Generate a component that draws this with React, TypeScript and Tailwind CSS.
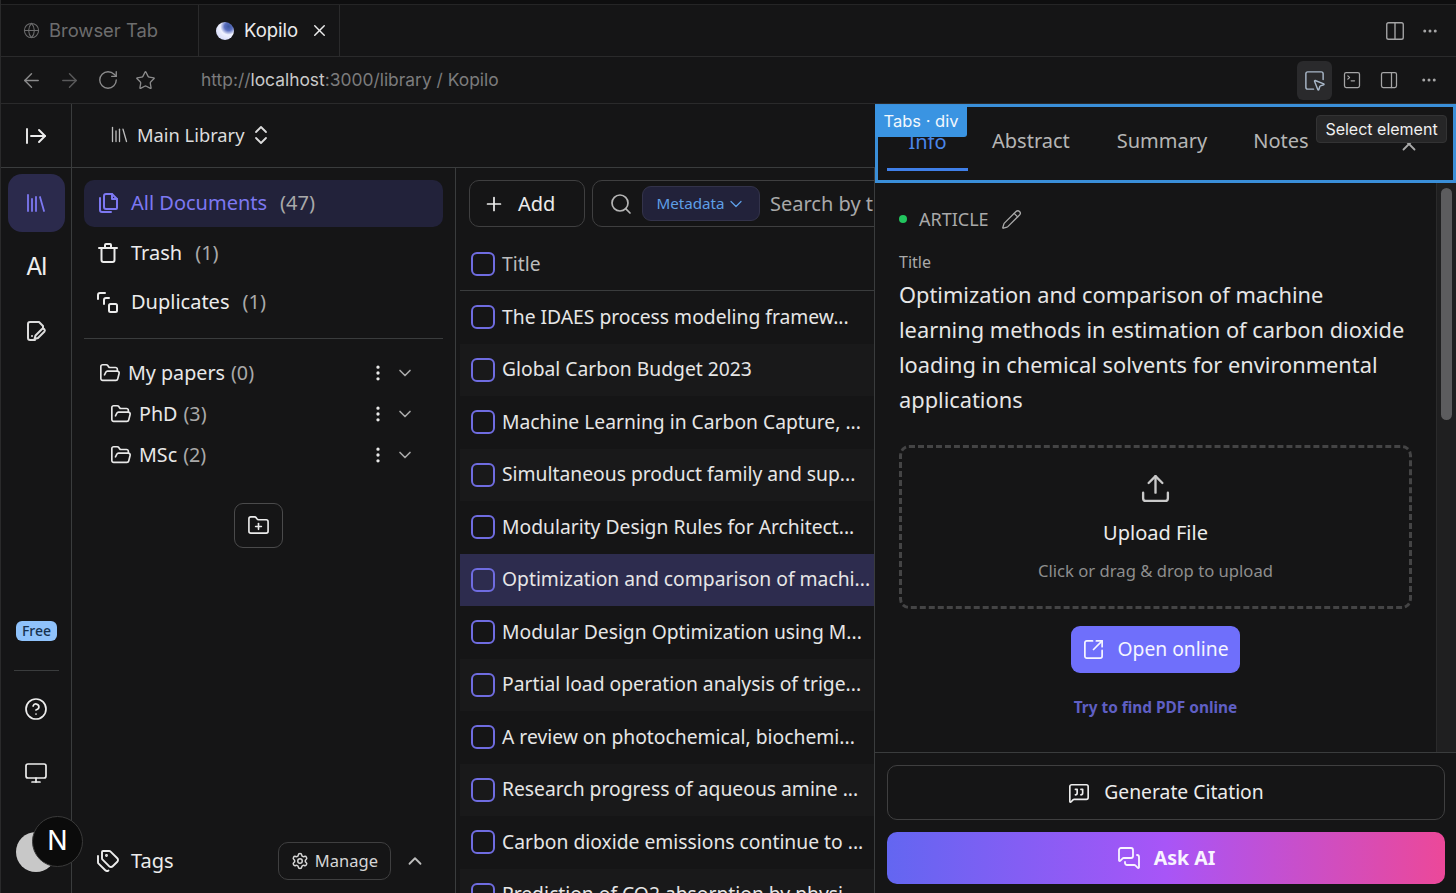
import {
  ArrowLeft,
  ArrowRight,
  ArrowRightFromLine,
  ChevronDown,
  ChevronUp,
  CircleHelp,
  Columns2,
  Ellipsis,
  EllipsisVertical,
  FolderOpen,
  FolderPlus,
  Globe,
  Library,
  MessageSquareQuote,
  MessagesSquare,
  Monitor,
  PanelRight,
  Pencil,
  Plus,
  RotateCw,
  Search,
  Settings,
  SquareArrowOutUpRight,
  SquareMousePointer,
  SquareTerminal,
  Star,
  Tags,
  Upload,
  X,
} from "lucide-react";

const documents = [
  "The IDAES process modeling framew...",
  "Global Carbon Budget 2023",
  "Machine Learning in Carbon Capture, ...",
  "Simultaneous product family and sup...",
  "Modularity Design Rules for Architect...",
  "Optimization and comparison of machi...",
  "Modular Design Optimization using M...",
  "Partial load operation analysis of trige...",
  "A review on photochemical, biochemi...",
  "Research progress of aqueous amine ...",
  "Carbon dioxide emissions continue to ...",
  "Prediction of CO2 absorption by physi...",
];

const FilesIcon = () => (
  <svg width="24" height="24" viewBox="0 0 24 24" fill="none" stroke="currentColor" strokeWidth="2" strokeLinecap="round" strokeLinejoin="round">
    <path d="M4 7v12a2 2 0 0 0 2 2h9" />
    <path d="M8 5a2 2 0 0 1 2-2h6l5 5v9a1 1 0 0 1-1 1H10a2 2 0 0 1-2-2z" />
    <path d="M16 3v5h5" />
  </svg>
);

const TrashIcon = () => (
  <svg width="24" height="24" viewBox="0 0 24 24" fill="none" stroke="currentColor" strokeWidth="2" strokeLinecap="round" strokeLinejoin="round">
    <path d="M3 7h18" />
    <path d="M5.5 7v12a2 2 0 0 0 2 2h9a2 2 0 0 0 2-2V7" />
    <path d="M9 7V4a1 1 0 0 1 1-1h4a1 1 0 0 1 1 1v3" />
  </svg>
);

const DuplicatesIcon = () => (
  <svg width="24" height="24" viewBox="0 0 24 24" fill="none" stroke="currentColor" strokeWidth="2" strokeLinecap="round" strokeLinejoin="round">
    <path d="M2 9V5a2 2 0 0 1 2-2h5" />
    <path d="M13 8h-3a2 2 0 0 0-2 2v4" />
    <rect x="13" y="14" width="8" height="8" rx="1.500" />
  </svg>
);

const UpDownIcon = () => (
  <svg width="18" height="24" viewBox="0 0 18 24" fill="none" stroke="currentColor" strokeWidth="1.800" strokeLinecap="round" strokeLinejoin="round">
    <path d="m4 9 5-5 5 5" />
    <path d="m4 15 5 5 5-5" />
  </svg>
);

const AiEditIcon = () => (
  <svg width="24" height="24" viewBox="0 0 24 24" fill="none" stroke="currentColor" strokeWidth="2" strokeLinecap="round" strokeLinejoin="round">
    <path d="M11 21H6a2 2 0 0 1-2-2V5a2 2 0 0 1 2-2h9l4 4v2" />
    <path d="m20.500 12.500-6.500 6.500-3.500 1 1-3.500 6.500-6.500a1.800 1.800 0 0 1 2.500 2.500z" />
    <path d="M8 17h.01" />
  </svg>
);

const Checkbox = () => (
  <span className="w-6 h-6 shrink-0 rounded-md border-2 border-[#6f6ce0]" />
);

function FolderRow({ name, count, indent }: { name: string; count: number; indent: boolean }) {
  return (
    <div className={`flex items-center h-[41px] ${indent ? "pl-[26px]" : "pl-[15px]"} pr-[28px] text-[#e8e8e8]`}>
      <FolderOpen size={22} strokeWidth={1.800} />
      <span className="ml-[7px] text-[19.700px]">{name}</span>
      <span className="ml-[6px] text-[19.700px] text-[#a9a9a9]">({count})</span>
      <EllipsisVertical size={20} className="ml-auto" />
      <ChevronDown size={20} className="ml-[7px] text-[#a9a9a9]" />
    </div>
  );
}

function TopBars() {
  return (
    <>
      <div className="h-[5px] bg-[#0e0e0f] border-b border-[#252526] shrink-0" />
      <div className="h-[52px] flex shrink-0 border-b border-[#2a2a2b] font-['Inter',sans-serif]">
        <div className="w-[198px] flex items-center pl-[22px] border-r border-[#2a2a2b] text-[#6d6d6e] bg-[#131314]">
          <Globe size={17} strokeWidth={1.500} />
          <span className="ml-[9px] text-[18.400px]">Browser Tab</span>
        </div>
        <div className="w-[141px] flex items-center pl-[17px] border-r border-[#2a2a2b] text-[#ececec]">
          <span className="w-[18px] h-[18px] rounded-full blur-[0.5px] bg-[radial-gradient(circle_at_70%_25%,#3f5a9f_0%,#5b6fc0_22%,#f0f2ff_45%,#c9cff5_100%)]" />
          <span className="ml-[10px] text-[18.500px]">Kopilo</span>
          <X size={19} strokeWidth={1.800} className="ml-[12px]" />
        </div>
        <div className="ml-auto flex items-center pr-[17px] text-[#a5a5a6]">
          <Columns2 size={22} strokeWidth={1.500} />
          <Ellipsis size={18} className="ml-[15px]" />
        </div>
      </div>
      <div className="h-[47px] flex items-center shrink-0 border-b border-[#2a2a2b] pl-[19px] pr-[18px] font-['Inter',sans-serif]">
        <ArrowLeft size={23} strokeWidth={1.500} className="text-[#8b8b8c]" />
        <ArrowRight size={23} strokeWidth={1.500} className="ml-[15px] text-[#5a5a5b]" />
        <RotateCw size={22} strokeWidth={1.500} className="ml-[16px] text-[#8b8b8c]" />
        <Star size={21} strokeWidth={1.500} className="ml-[16px] text-[#8b8b8c]" />
        <span className="ml-[45px] text-[17.400px] text-[#7c7c7d]">
          http://<span className="text-[#c9c9c9]">localhost</span>:3000/library / Kopilo
        </span>
        <span className="ml-auto w-[35px] h-[39px] rounded-md bg-[#2a2a2c] flex items-center justify-center text-[#a9b8c9]">
          <SquareMousePointer size={23} strokeWidth={1.500} />
        </span>
        <SquareTerminal size={20} strokeWidth={1.500} className="ml-[10px] text-[#a5a5a6]" />
        <PanelRight size={20} strokeWidth={1.500} className="ml-[17px] text-[#a5a5a6]" />
        <Ellipsis size={18} className="ml-[21px] text-[#a5a5a6]" />
      </div>
    </>
  );
}

function Rail() {
  return (
    <aside className="relative w-[71px] shrink-0 border-r border-[#3a3c3d] flex flex-col items-center">
      <div className="h-[64px] w-full border-b border-[#3a3c3d] flex items-center justify-center text-[#ededed] shrink-0">
        <ArrowRightFromLine size={24} strokeWidth={1.900} />
      </div>
      <div className="mt-[6px] w-[57px] h-[58px] rounded-[14px] bg-[#2b2a4c] flex items-center justify-center text-[#7d78f2]">
        <Library size={24} strokeWidth={1.800} />
      </div>
      <div className="mt-[20px] text-[#ededed] text-[24px] leading-[30px] tracking-[-1.500px] font-['Inter',sans-serif]">AI</div>
      <div className="mt-[37px] text-[#dcdcdc] h-[24px]">
        <AiEditIcon />
      </div>
      <div className="mt-[278px] ml-px rounded-md bg-[#8fc2fb] px-[6px] text-[14px] leading-[20px] font-medium text-[#17324f]">Free</div>
      <div className="mt-[29px] w-[45px] h-px bg-[#3a3c3d]" />
      <CircleHelp size={24} strokeWidth={1.700} className="mt-[26px] text-[#ededed]" />
      <Monitor size={24} strokeWidth={1.700} className="mt-[40px] text-[#ededed]" />
      <span className="mt-[47px] w-[40px] h-[40px] rounded-full bg-[#c8c8c8]" />
      <span className="absolute left-[31px] bottom-[26px] w-[51px] h-[51px] rounded-full bg-[#0b0b0b] border border-[#3a3a3a] flex items-center justify-center text-[27px] text-white font-['Inter',sans-serif]">
        N
      </span>
    </aside>
  );
}

function Sidebar() {
  return (
    <section className="w-[384px] shrink-0 border-r border-[#3a3c3d] flex flex-col px-[12px] pt-[12px] pb-[13px]">
      <div className="h-[47px] rounded-[10px] bg-[#22223a] flex items-center pl-[12px] pb-[2px] text-[#7d78f2]">
        <FilesIcon />
        <span className="ml-[11px] text-[20px]">All Documents</span>
        <span className="ml-[13px] text-[20px] text-[#a9a9a9]">(47)</span>
      </div>
      <div className="h-[49px] mt-px flex items-center pl-[12px] text-[#ececec]">
        <TrashIcon />
        <span className="ml-[11px] text-[20px]">Trash</span>
        <span className="ml-[13px] text-[20px] text-[#a9a9a9]">(1)</span>
      </div>
      <div className="h-[50px] flex items-center pl-[12px] text-[#ececec]">
        <DuplicatesIcon />
        <span className="ml-[11px] text-[20px]">Duplicates</span>
        <span className="ml-[13px] text-[20px] text-[#a9a9a9]">(1)</span>
      </div>
      <div className="h-px bg-[#3a3c3d] mt-[11px] mb-[13px]" />
      <FolderRow name="My papers" count={0} indent={false} />
      <FolderRow name="PhD" count={3} indent={true} />
      <FolderRow name="MSc" count={2} indent={true} />
      <div className="mt-[28px] self-start ml-[150px] w-[49px] h-[45px] rounded-[9px] border border-[#4a4a4b] flex items-center justify-center text-[#ececec]">
        <FolderPlus size={23} strokeWidth={1.700} />
      </div>
      <div className="mt-auto flex items-center pl-[12px] pr-[17px] text-[#ececec]">
        <Tags size={24} strokeWidth={1.900} />
        <span className="ml-[11px] text-[20px]">Tags</span>
        <div className="ml-auto h-[38px] px-[12px] rounded-[10px] border border-[#3f3f40] flex items-center gap-[6px] text-[16.500px] text-[#d6d6d6]">
          <Settings size={18} />
          Manage
        </div>
        <ChevronUp size={22} className="ml-[13px] text-[#bdbdbd]" />
      </div>
    </section>
  );
}

function DocumentList() {
  return (
    <section className="w-[419px] shrink-0 border-r border-[#3a3c3d] overflow-hidden flex flex-col">
      <div className="flex pt-[12px] pl-[13px] gap-[7px] shrink-0">
        <div className="w-[116px] h-[47px] rounded-[10px] border border-[#3f3f40] flex items-center pl-[13px] text-[#ececec] shrink-0">
          <Plus size={22} strokeWidth={1.900} />
          <span className="ml-[13px] text-[20px]">Add</span>
        </div>
        <div className="w-[400px] h-[47px] rounded-[10px] border border-[#3f3f40] flex items-center pl-[16px] shrink-0 whitespace-nowrap">
          <Search size={24} strokeWidth={1.700} className="text-[#b5b5b5] shrink-0" />
          <span className="ml-[9px] h-[35px] w-[118px] shrink-0 rounded-[9px] bg-[#22223a] border border-[#33334a] flex items-center justify-center gap-[1px] text-[15.200px] text-[#5e9fe6]">
            Metadata
            <ChevronDown size={20} strokeWidth={1.500} />
          </span>
          <span className="ml-[10px] text-[20px] text-[#a9a9a9]">Search by title or content</span>
        </div>
      </div>
      <div className="ml-[4px] mt-[11px] h-[53px] flex items-center pl-[11px] gap-[7px] border-b border-[#3a3c3d] shrink-0 text-[19.300px] text-[#bcbcbc]">
        <Checkbox />
        Title
      </div>
      {documents.map((title, i) => (
        <div
          key={title}
          className={`ml-[4px] h-[52.500px] flex items-center pl-[11px] gap-[7px] shrink-0 whitespace-nowrap text-[19.300px] ${
            i === 5 ? "bg-[#2d2c4e]" : i % 2 === 1 ? "bg-[#19191a]" : ""
          } text-[#e6e6e6]`}
        >
          <Checkbox />
          {title}
        </div>
      ))}
    </section>
  );
}

function DetailPanel() {
  return (
    <section className="relative flex-1 min-w-0 flex flex-col -mt-[64px] bg-[#151516]">
      <div className="h-[79px] shrink-0 flex items-end border-[3px] border-[#3a8fd9] text-[20px] text-[#b5b5b5]">
        <div className="ml-[9px] w-[81px] h-[55px] text-center text-[#4a86e8] pt-[11px] border-b-[3px] border-[#3f7fe8] mb-[9px]">Info</div>
        <div className="ml-[24px] pb-[24px]">Abstract</div>
        <div className="ml-[47px] pb-[24px]">Summary</div>
        <div className="ml-[46px] pb-[24px]">Notes</div>
        <X size={22} className="ml-auto mr-[33px] mb-[25px] text-[#a9a9a9]" />
      </div>
      <div className="absolute left-0 top-[1px] h-[32px] w-[92px] rounded-br-[3px] bg-[#3a94e2] text-[#f3f8fd] text-[16.500px] leading-[32px] text-center font-['Inter',sans-serif]">
        Tabs · div
      </div>
      <div className="absolute left-[441px] top-[11px] h-[28px] w-[131px] rounded-sm bg-[#262627] border border-[#333334] text-[#f0f0f0] text-[16px] leading-[26px] text-center font-['Inter',sans-serif]">
        Select element
      </div>
      <div className="flex-1 min-h-0 flex overflow-hidden">
        <div className="flex-1 min-w-0 px-[24px] pt-[24px]">
          <div className="flex items-center h-[24px] text-[#a9a9a9]">
            <span className="w-[8px] h-[8px] rounded-full bg-[#22c55e]" />
            <span className="ml-[12px] text-[18px]">ARTICLE</span>
            <Pencil size={21} strokeWidth={1.500} className="ml-[12px]" />
          </div>
          <div className="mt-[20px] text-[16px] leading-[22px] text-[#a9a9a9]">Title</div>
          <div className="mt-[4px] text-[21.800px] leading-[35px] text-[#e6e6e6]">
            Optimization and comparison of machine learning methods in estimation of carbon dioxide loading in chemical solvents for environmental applications
          </div>
          <div className="mt-[28px] h-[164px] rounded-[10px] border-[3px] border-dashed border-[#444445] flex flex-col items-center">
            <Upload size={33} strokeWidth={1.700} className="mt-[24px] text-[#c9c9c9]" />
            <div className="mt-[14px] text-[20px] leading-[28px] text-[#ececec]">Upload File</div>
            <div className="mt-[12px] text-[16.650px] leading-[24px] text-[#8e8e8e]">Click or drag &amp; drop to upload</div>
          </div>
          <div className="mt-[17px] flex justify-center">
            <div className="h-[47px] w-[169px] rounded-[9px] bg-[#6f6ffb] flex items-center justify-center gap-[12px] text-[19.300px] text-[#f5f5ff]">
              <SquareArrowOutUpRight size={23} strokeWidth={1.800} />
              Open online
            </div>
          </div>
          <div className="mt-[23px] text-center text-[15.400px] font-bold text-[#5f5fc4]">Try to find PDF online</div>
        </div>
        <div className="w-[20px] shrink-0 bg-[#1f1f20] border-l border-[#2a2a2b] pl-[4px] pt-[5px]">
          <div className="w-[11px] h-[232px] rounded-full bg-[#5c5c5e]" />
        </div>
      </div>
      <div className="h-[141px] shrink-0 border-t border-[#3a3c3d] pl-[12px] pr-[11px] pt-[12px]">
        <div className="h-[55px] rounded-[10px] border border-[#3f3f40] flex items-center justify-center gap-[14px] text-[19.300px] text-[#ececec]">
          <MessageSquareQuote size={22} strokeWidth={1.800} />
          Generate Citation
        </div>
        <div className="mt-[12px] h-[52px] rounded-[10px] bg-[linear-gradient(90deg,#6366f1_0%,#a855f7_50%,#ec4899_100%)] flex items-center justify-center gap-[13px] text-[19.500px] font-bold text-[#f8f4ff]">
          <MessagesSquare size={24} strokeWidth={1.800} />
          Ask AI
        </div>
      </div>
    </section>
  );
}

export default function App() {
  return (
    <div className="w-[1456px] h-[893px] overflow-hidden flex flex-col bg-[#151516] border-l border-[#2a2a2b] font-['Noto_Sans',sans-serif]">
      <TopBars />
      <div className="flex-1 min-h-0 flex">
        <Rail />
        <div className="flex-1 min-w-0 flex flex-col">
          <div className="h-[64px] shrink-0 border-b border-[#3a3c3d] flex items-center pl-[37px] pb-[2px] text-[#dcdcdc]">
            <Library size={21} strokeWidth={1.500} className="text-[#bdbdbd]" />
            <span className="ml-[7px] text-[18.300px]">Main Library</span>
            <span className="ml-[8px]">
              <UpDownIcon />
            </span>
          </div>
          <div className="flex-1 min-h-0 flex">
            <Sidebar />
            <DocumentList />
            <DetailPanel />
          </div>
        </div>
      </div>
    </div>
  );
}
